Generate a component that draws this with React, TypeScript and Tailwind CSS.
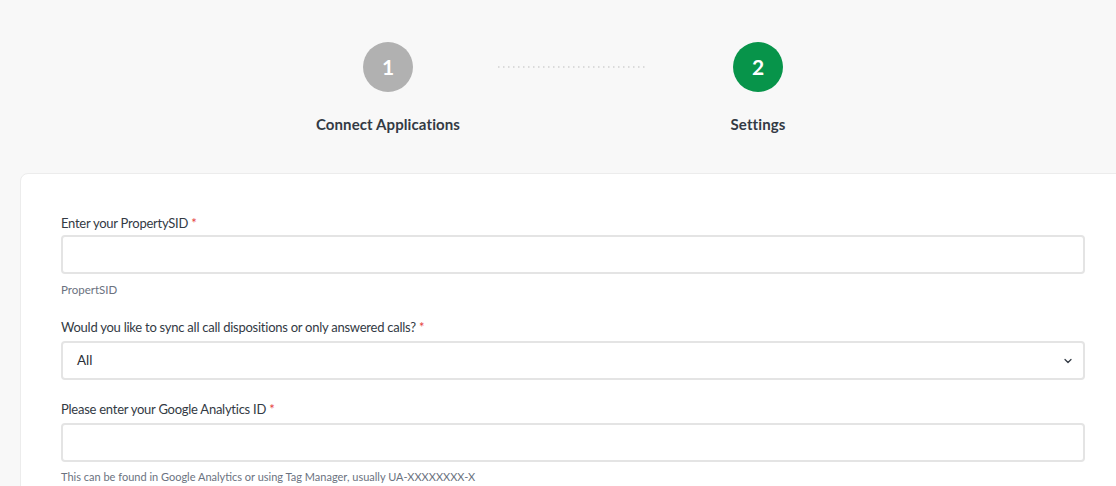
import { ChevronDown } from 'lucide-react';

function Step({ n, label, active }: { n: number; label: string; active?: boolean }) {
  return (
    <div className="flex w-[220px] flex-col items-center">
      <div
        className={`flex h-[50px] w-[50px] items-center justify-center rounded-full text-[21px] font-bold text-white ${
          active ? 'bg-[#07944a]' : 'bg-[#b1b1b1]'
        }`}
      >
        {n}
      </div>
      <p className="mt-[22px] text-[15px] leading-[20px] font-bold tracking-[0.1px] text-[#333a44]">
        {label}
      </p>
    </div>
  );
}

function Label({ children }: { children: React.ReactNode }) {
  return (
    <label className="block text-[13px] leading-[18px] tracking-[-0.25px] text-[#333a44]">
      {children} <span className="text-[#e53e3e]">*</span>
    </label>
  );
}

export default function App() {
  return (
    <div
      className="h-[486px] w-[1116px] overflow-hidden bg-[#f8f8f8]"
      style={{ fontFamily: '"Lato", "Noto Sans", sans-serif' }}
    >
      <div className="flex h-[173px] justify-center pt-[42px] pl-[30px]">
        <Step n={1} label="Connect Applications" />
        <svg width="150" height="4" className="mt-[23px]">
          <line x1="0" y1="2" x2="150" y2="2" stroke="#bdbdbd" strokeWidth="1" strokeDasharray="1.5 3.5" />
        </svg>
        <Step n={2} label="Settings" active />
      </div>

      <div className="ml-[20px] w-[1106px] rounded-[8px] border border-[#ececec] bg-white px-[40px] pt-[40px] pb-10">
        <Label>Enter your PropertySID</Label>
        <div className="mt-[3px] h-[39px] rounded-[4px] border-2 border-[#e4e4e4] bg-white" />
        <p className="mt-[8px] text-[11.5px] leading-[16px] text-[#6b7280]">PropertSID</p>

        <div className="mt-[20px]">
          <Label>Would you like to sync all call dispositions or only answered calls?</Label>
        </div>
        <div className="mt-[5px] flex h-[39px] items-center justify-between rounded-[4px] border-2 border-[#e4e4e4] bg-white pr-[9px] pl-[14px]">
          <span className="text-[13.5px] text-[#2b2f36]">All</span>
          <ChevronDown size={12} strokeWidth={2.5} className="text-[#333a44]" />
        </div>

        <div className="mt-[20px]">
          <Label>Please enter your Google Analytics ID</Label>
        </div>
        <div className="mt-[5px] h-[39px] rounded-[4px] border-2 border-[#e4e4e4] bg-white" />
        <p className="mt-[7px] text-[11px] leading-[16px] text-[#6b7280]">
          This can be found in Google Analytics or using Tag Manager, usually UA-XXXXXXXX-X
        </p>
      </div>
    </div>
  );
}
